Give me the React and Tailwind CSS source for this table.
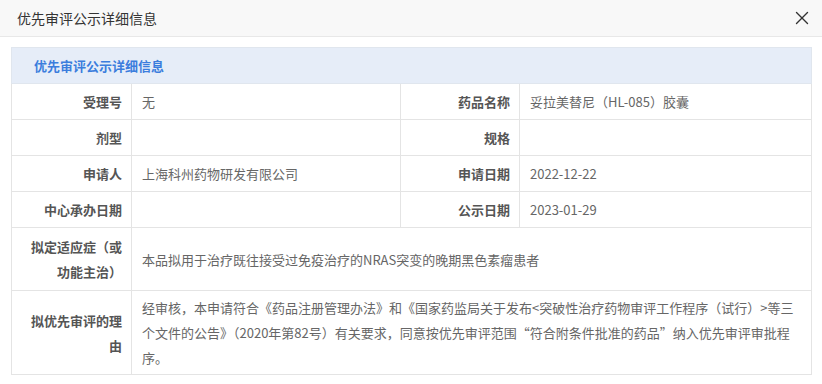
import { X } from 'lucide-react';

const font = { fontFamily: '"Noto Sans CJK SC", "Noto Sans", sans-serif' };

const pairs = [
  ['受理号', '无', '药品名称', '妥拉美替尼（HL-085）胶囊'],
  ['剂型', '', '规格', ''],
  ['申请人', '上海科州药物研发有限公司', '申请日期', '2022-12-22'],
  ['中心承办日期', '', '公示日期', '2023-01-29'],
];

function Label({ children, className = '' }) {
  return (
    <td className={`border border-[#e4e4e4] pr-[9px] pl-2 text-right font-bold text-[#555] align-middle ${className}`}>
      {children}
    </td>
  );
}

function Value({ children, className = '', colSpan }) {
  return (
    <td colSpan={colSpan} className={`border border-[#e4e4e4] px-[10px] text-left text-[#666] align-middle ${className}`}>
      {children}
    </td>
  );
}

export default function App() {
  return (
    <div className="w-[822px] h-[384px] bg-white overflow-hidden" style={font}>
      <div className="h-[37px] bg-[#f8f8f8] border-b border-[#e8e8e8] flex items-center justify-between pl-[17px] pr-[9px]">
        <span className="text-[14px] text-[#333]">优先审评公示详细信息</span>
        <X className="w-[22px] h-[22px] text-[#333]" strokeWidth={1.5} />
      </div>
      <div className="pt-[10px] pl-[11px]">
        <table className="w-[800px] border-collapse table-fixed text-[13px] leading-[25px]">
          <colgroup>
            <col className="w-[120px]" />
            <col className="w-[269px]" />
            <col className="w-[119px]" />
            <col className="w-[292px]" />
          </colgroup>
          <tbody>
            <tr className="h-[36px] bg-[#e6edf8]">
              <td colSpan={4} className="border border-[#e0e6ee] pl-[22px] font-bold text-[#3b7ddd]">
                优先审评公示详细信息
              </td>
            </tr>
            {pairs.map((r) => (
              <tr key={r[0]} className="h-[36px]">
                <Label>{r[0]}</Label>
                <Value>{r[1]}</Value>
                <Label>{r[2]}</Label>
                <Value>{r[3]}</Value>
              </tr>
            ))}
            <tr className="h-[62px]">
              <Label className="py-[6px]">拟定适应症（或功能主治）</Label>
              <Value colSpan={3} className="py-[6px]">
                本品拟用于治疗既往接受过免疫治疗的NRAS突变的晚期黑色素瘤患者
              </Value>
            </tr>
            <tr>
              <Label className="py-[4px]">拟优先审评的理由</Label>
              <Value colSpan={3} className="py-[4px]">
                经审核，本申请符合《药品注册管理办法》和《国家药监局关于发布&lt;突破性治疗药物审评工作程序（试行）&gt;等三个文件的公告》（2020年第82号）有关要求，同意按优先审评范围“符合附条件批准的药品”纳入优先审评审批程序。
              </Value>
            </tr>
          </tbody>
        </table>
      </div>
    </div>
  );
}
